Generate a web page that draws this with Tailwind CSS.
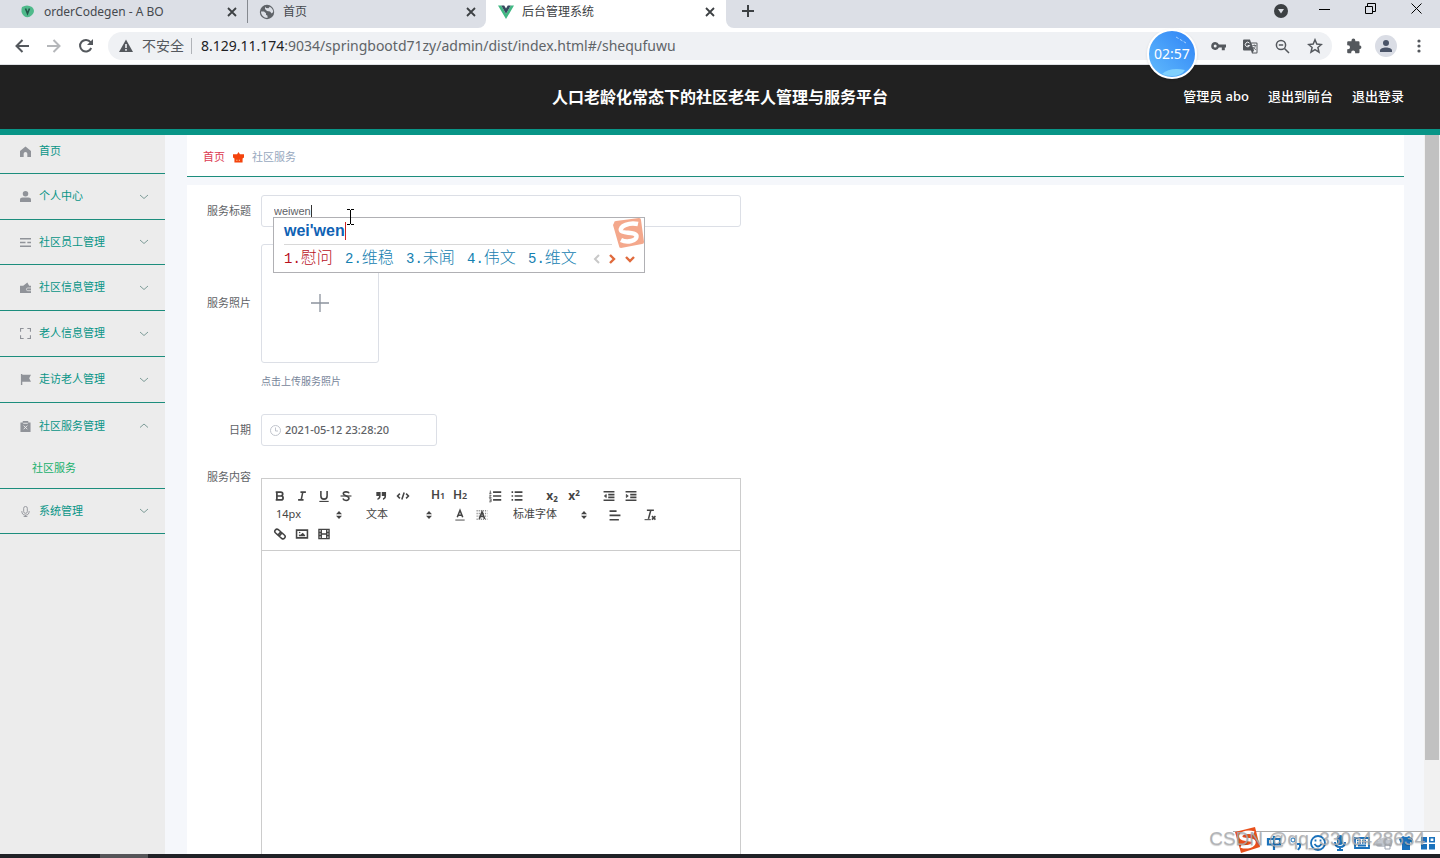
<!DOCTYPE html>
<html lang="zh-CN">
<head>
<meta charset="utf-8">
<title>后台管理系统</title>
<script src="https://cdn.jsdelivr.net/npm/@tailwindcss/browser@4"></script>
</head>
<body class="relative flex h-screen flex-col overflow-hidden bg-white font-['Noto_Sans','Noto_Sans_CJK_SC',sans-serif] text-[11px] text-[#606266]">

<!-- Browser tabs -->
<div class="flex h-7 shrink-0 bg-white text-xs text-[#45494e]">
  <div class="flex rounded-br-lg bg-[#dcdfe6]">
    <div class="flex h-[23px] w-[248px] items-center border-r border-[#85898f] pr-[9px] pl-5">
      <svg class="mr-2 h-4 w-4" viewBox="0 0 16 16"><path d="M2 3Q7 0 12 3Q16 7 12 11Q8 15 4 12Q0 8 2 3Z" fill="#4fba8b"/><path d="M5.500 4.500l2 5l2-5" fill="none" stroke="#23574a" stroke-width="1.600"/></svg>
      <span class="flex-1 whitespace-nowrap">orderCodegen - A BO</span>
      <button aria-label="关闭标签页" class="text-[#3c4043]"><svg class="h-3 w-3" viewBox="0 0 12 12" fill="none" stroke="currentColor" stroke-width="1.800"><path d="M2 2l8 8M10 2l-8 8"/></svg></button>
    </div>
    <div class="flex h-[23px] w-[238px] items-center pr-[9px] pl-[11px]">
      <svg class="mr-2 h-4 w-4" viewBox="0 0 16 16"><circle cx="8" cy="8" r="7.200" fill="#5f6368"/><path d="M2 7.500h3l2 1.800v1.400l1.500 1v2.300C4.500 14 2 11 2 7.500zM6 2.500l1 1.500 2.500.3 1.200-1.600c2.300 1 3.500 3 3.500 5.300l-1.500 1.500-1.700-2-3-.5-2-2z" fill="#dcdfe6"/></svg>
      <span class="flex-1">首页</span>
      <button aria-label="关闭标签页" class="text-[#3c4043]"><svg class="h-3 w-3" viewBox="0 0 12 12" fill="none" stroke="currentColor" stroke-width="1.800"><path d="M2 2l8 8M10 2l-8 8"/></svg></button>
    </div>
  </div>
  <div class="flex h-7 w-60 items-center bg-white pr-2.5 pb-[5px] pl-3">
    <svg class="mr-2 h-4 w-4" viewBox="0 0 16 16"><path d="M0 1.500h3.200L8 9.800l4.800-8.300H16L8 15z" fill="#41b883"/><path d="M3.200 1.500h3L8 4.600l1.800-3.100h3L8 9.800z" fill="#35495e"/></svg>
    <span class="flex-1 text-[#3c4043]">后台管理系统</span>
    <button aria-label="关闭标签页" class="text-[#3c4043]"><svg class="h-3 w-3" viewBox="0 0 12 12" fill="none" stroke="currentColor" stroke-width="1.800"><path d="M2 2l8 8M10 2l-8 8"/></svg></button>
  </div>
  <div class="flex flex-1 rounded-bl-lg bg-[#dcdfe6]">
    <button aria-label="新标签页" class="ml-4 h-[22px] text-[#3c4043]"><svg class="h-3 w-3" viewBox="0 0 12 12" fill="none" stroke="currentColor" stroke-width="2"><path d="M6 0v12M0 6h12"/></svg></button>
    <div class="ml-auto flex h-[22px] items-center text-black">
      <button aria-label="搜索标签页" class="mr-[31px]"><svg class="h-[14px] w-[14px]" viewBox="0 0 14 14"><circle cx="7" cy="7" r="7" fill="#3c4043"/><path d="M4 5h6l-3 4.500z" fill="#dcdfe6"/></svg></button>
      <button aria-label="最小化" class="mr-[35px] mb-1.5"><svg class="h-[11px] w-[11px]" viewBox="0 0 11 11"><path d="M0 6.500h11" stroke="#000"/></svg></button>
      <button aria-label="还原" class="mr-[35px] mb-1.5"><svg class="h-[11px] w-[11px]" viewBox="0 0 11 11" fill="none" stroke="#000"><path d="M.5 3.500h7v7h-7zM2.500 3V.5h8v8H8"/></svg></button>
      <button aria-label="关闭" class="mr-[18px] mb-1.5"><svg class="h-[11px] w-[11px]" viewBox="0 0 11 11" fill="none" stroke="#000"><path d="M.5.5l10 10M10.500.5l-10 10"/></svg></button>
    </div>
  </div>
</div>

<!-- Browser toolbar -->
<div class="flex h-[37px] shrink-0 items-center border-b border-[#dfe1e5] bg-white text-[#54585d]">
  <button aria-label="后退" class="ml-[15px]"><svg class="h-[14px] w-[14px]" viewBox="0 0 14 14" fill="none" stroke="currentColor" stroke-width="2"><path d="M14 7H1.500M7.500 1L1.500 7l6 6"/></svg></button>
  <button aria-label="前进" class="ml-[18px] text-[#b5b7ba]"><svg class="h-[14px] w-[14px]" viewBox="0 0 14 14" fill="none" stroke="currentColor" stroke-width="2"><path d="M0 7h12.500M6.500 1l6 6-6 6"/></svg></button>
  <button aria-label="重新加载" class="ml-[17px]"><svg class="h-4 w-4" viewBox="0 0 16 16"><path d="M13.200 10A5.800 5.800 0 1 1 12.500 4.200" fill="none" stroke="currentColor" stroke-width="2"/><path d="M15 1v6H9z" fill="currentColor"/></svg></button>
  <div class="ml-[14px] flex h-7 flex-1 items-center rounded-full bg-[#eff1f4] pl-[11px]">
    <svg class="h-[14px] w-[14px]" viewBox="0 0 14 14"><path d="M7 .5L14 13H0z" fill="#54585d"/><path d="M7 5v4M7 10v1.700" stroke="#eff1f4" stroke-width="1.600"/></svg>
    <span class="ml-[9px] text-sm">不安全</span>
    <span class="mr-[9px] ml-[7px] h-4 w-px bg-[#b0b3b8]"></span>
    <div class="flex-1 text-sm whitespace-nowrap text-[#606468]"><span class="text-[#202124]">8.129.11.174</span>:9034/springbootd71zy/admin/dist/index.html#/shequfuwu</div>
    <div class="mr-[9px] flex items-center gap-[17px]">
      <button aria-label="密码"><svg class="h-[15px] w-[15px]" viewBox="0 0 15 15"><path d="M4.200 3a4 4 0 0 1 3.700 2.600H15v3h-1.200v2.600h-3V8.600H7.900A4 4 0 1 1 4.200 3z" fill="currentColor"/><circle cx="4.200" cy="7" r="1.500" fill="#eff1f4"/></svg></button>
      <button aria-label="翻译"><svg class="h-[15px] w-[15px]" viewBox="0 0 15 15"><path d="M1 .5h6l1 3h5.500a1 1 0 0 1 1 1v9a1 1 0 0 1-1 1H9l-1-3H1a1 1 0 0 1-1-1v-9a1 1 0 0 1 1-1z" fill="currentColor"/><path d="M8.500 4.500h5v9H9.700l1.300-2z" fill="#eff1f4"/><path d="M6.500 4.200a2.300 2.300 0 1 0 .2 2.300H4.600" fill="none" stroke="#eff1f4"/><path d="M9.300 6.500h4M11.300 5.500v1M12.500 6.500q-.5 2.500-2.500 4M10 8q1 1.800 3 2.700" fill="none" stroke="currentColor" stroke-width=".8"/></svg></button>
      <button aria-label="缩放"><svg class="h-[15px] w-[15px]" viewBox="0 0 15 15" fill="none" stroke="currentColor" stroke-width="1.500"><circle cx="6" cy="6" r="4.600"/><path d="M9.500 9.500l4.500 4.500M3.800 6h4.400"/></svg></button>
      <button aria-label="收藏"><svg class="h-4 w-4" viewBox="0 0 16 16" fill="none" stroke="currentColor" stroke-width="1.500"><path d="M8 1.800l1.800 4.300 4.600.4-3.500 3 1.100 4.600L8 11.700l-4 2.400 1.100-4.600-3.500-3 4.600-.4z"/></svg></button>
    </div>
  </div>
  <button aria-label="扩展程序" class="ml-[14px]"><svg class="h-4 w-4" viewBox="0 0 16 16"><path d="M13.500 7.500V4.200a1 1 0 0 0-1-1H9.300V2.500a1.900 1.900 0 0 0-3.800 0v.7H2.200a1 1 0 0 0-1 1v3h.8a2 2 0 0 1 0 4h-.8v3a1 1 0 0 0 1 1h3v-.8a2 2 0 0 1 4 0v.8h3.300a1 1 0 0 0 1-1v-3.200h.5a1.800 1.800 0 0 0 0-3.500z" fill="currentColor"/></svg></button>
  <button aria-label="用户" class="ml-[13px]"><svg class="h-[22px] w-[22px]" viewBox="0 0 22 22"><circle cx="11" cy="11" r="11" fill="#dadde5"/><circle cx="11" cy="8" r="3" fill="#4a5468"/><path d="M5 17v-1.500c0-2 3-3 6-3s6 1 6 3V17z" fill="#4a5468"/></svg></button>
  <button aria-label="更多" class="mr-[19px] ml-5"><svg class="h-[14px] w-1" viewBox="0 0 4 14" fill="currentColor"><circle cx="2" cy="2" r="1.600"/><circle cx="2" cy="7" r="1.600"/><circle cx="2" cy="12" r="1.600"/></svg></button>
</div>

<!-- Recording timer -->
<div class="absolute top-[29px] left-[1147px] z-20 flex h-[50px] w-[50px] items-center justify-center rounded-full border-2 border-white bg-linear-to-bl from-[#2f82f5] to-[#62bbfc] text-sm text-white shadow">
  <svg class="absolute inset-0 h-[46px] w-[46px]" viewBox="0 0 46 46" fill="none"><path d="M13 43q8-7 23-4q-4 6-13 6q-6 0-10-2z" fill="#7fd0fd"/><path d="M27 6l10 6" stroke="#a9d2ff" stroke-dasharray="3 1.500"/></svg>
  <span class="relative">02:57</span>
</div>

<!-- Site header -->
<header class="relative flex h-[70px] shrink-0 items-center justify-center border-b-6 border-[#089587] bg-[#212121] text-white">
  <h1 class="text-base font-bold">人口老龄化常态下的社区老年人管理与服务平台</h1>
  <nav class="absolute inset-y-0 right-9 flex items-center gap-[19px] text-[13px] font-medium">
    <span>管理员 abo</span><a href="#">退出到前台</a><a href="#">退出登录</a>
  </nav>
</header>

<div class="flex min-h-0 flex-1 bg-[#f5f7fb]">
  <!-- Sidebar -->
  <aside class="w-[165px] shrink-0 bg-[#ececec] text-[#089587]">
    <a href="#" class="flex h-[39px] items-center border-b border-[#1c8d7d] pb-1.5 pl-5"><svg class="mr-2 h-[11px] w-[11px] text-[#909399]" viewBox="0 0 12 12" fill="currentColor"><path d="M6 .5L12 5.500V12H8V8.500a2 2 0 0 0-4 0V12H0V5.500z"/></svg>首页</a>
    <a href="#" class="flex h-[46px] items-center border-b border-[#1c8d7d] pr-4 pl-5"><svg class="mr-2 h-[11px] w-[11px] text-[#909399]" viewBox="0 0 12 12" fill="currentColor"><circle cx="6" cy="3" r="3"/><path d="M0 12V9.500q0-2.500 3-2.500h6q3 0 3 2.500V12z"/></svg><span class="flex-1">个人中心</span><svg class="h-2.5 w-2.5" viewBox="0 0 10 10" fill="none" stroke="#7d9c98"><path d="M1 3l4 3.500L9 3"/></svg></a>
    <a href="#" class="flex h-[45px] items-center border-b border-[#1c8d7d] pr-4 pl-5"><svg class="mr-2 h-[11px] w-[11px] text-[#909399]" viewBox="0 0 12 12" fill="none" stroke="currentColor" stroke-width="1.700"><path d="M0 2h12M0 6h6M0 10h12M8 6h4"/></svg><span class="flex-1">社区员工管理</span><svg class="h-2.5 w-2.5" viewBox="0 0 10 10" fill="none" stroke="#7d9c98"><path d="M1 3l4 3.500L9 3"/></svg></a>
    <a href="#" class="flex h-[46px] items-center border-b border-[#1c8d7d] pr-4 pl-5"><svg class="mr-2 h-[11px] w-[11px] text-[#909399]" viewBox="0 0 12 12"><path d="M0 4h3.500L8 .5 10 4h2v8H0z" fill="currentColor"/><path d="M12 6.500H8.500a1.500 1.500 0 0 0 0 3H12" fill="none" stroke="#ececec" stroke-width=".8"/></svg><span class="flex-1">社区信息管理</span><svg class="h-2.5 w-2.5" viewBox="0 0 10 10" fill="none" stroke="#7d9c98"><path d="M1 3l4 3.500L9 3"/></svg></a>
    <a href="#" class="flex h-[46px] items-center border-b border-[#1c8d7d] pr-4 pl-5"><svg class="mr-2 h-[11px] w-[11px] text-[#909399]" viewBox="0 0 12 12" fill="none" stroke="currentColor" stroke-width="1.200"><path d="M.6 4V.6H4M8 .6h3.400V4M11.400 8v3.400H8M4 11.400H.6V8"/></svg><span class="flex-1">老人信息管理</span><svg class="h-2.5 w-2.5" viewBox="0 0 10 10" fill="none" stroke="#7d9c98"><path d="M1 3l4 3.500L9 3"/></svg></a>
    <a href="#" class="flex h-[46px] items-center border-b border-[#1c8d7d] pr-4 pl-5"><svg class="mr-2 h-[11px] w-[11px] text-[#909399]" viewBox="0 0 12 12" fill="currentColor"><path d="M1 0h1.500v.8H12L10 4.500l2 4H2.500V12H1z"/></svg><span class="flex-1">走访老人管理</span><svg class="h-2.5 w-2.5" viewBox="0 0 10 10" fill="none" stroke="#7d9c98"><path d="M1 3l4 3.500L9 3"/></svg></a>
    <div class="h-[86px] border-b border-[#1c8d7d]">
      <a href="#" class="flex h-[46px] items-center pr-4 pl-5"><svg class="mr-2 h-[11px] w-[11px] text-[#909399]" viewBox="0 0 12 12"><path d="M.5 1.500H3V0h6v1.500h2.500V12H.5z" fill="currentColor"/><path d="M3.500 2.500h5M4 5l4 4M8 5L4 9" stroke="#ececec"/></svg><span class="flex-1">社区服务管理</span><svg class="h-2.5 w-2.5" viewBox="0 0 10 10" fill="none" stroke="#7d9c98"><path d="M1 6.500L5 3l4 3.500"/></svg></a>
      <a href="#" class="flex h-[39px] items-center pl-8 text-[#17b06b]">社区服务</a>
    </div>
    <a href="#" class="flex h-[45px] items-center border-b border-[#1c8d7d] pr-4 pl-5"><svg class="mr-2 h-[11px] w-[11px] text-[#909399]" viewBox="0 0 12 12" fill="none" stroke="currentColor"><rect x="4" y=".5" width="4" height="7.500" rx="2"/><path d="M2 5.500q0 4.500 4 4.500t4-4.500M6 10v2M4 11.500h4"/></svg><span class="flex-1">系统管理</span><svg class="h-2.5 w-2.5" viewBox="0 0 10 10" fill="none" stroke="#7d9c98"><path d="M1 3l4 3.500L9 3"/></svg></a>
  </aside>

  <!-- Main column -->
  <main class="mr-5 ml-[22px] flex min-w-0 flex-1 flex-col">
    <nav class="flex h-[42px] shrink-0 items-center border-b border-[#1c8d7d] bg-white pt-[3px] pl-4">
      <a href="#" class="text-[#dc3b52]">首页</a>
      <svg class="mx-2 h-[11px] w-[11px]" viewBox="0 0 10 10"><path d="M5 0l1.300 2H10v3L8.700 6v3.500H1.300V6L0 5V2h3.700z" fill="#f4430c"/><path d="M3.500 7v1M5.800 7v1" stroke="#ffd0a0"/></svg>
      <span class="text-[#97a8be]">社区服务</span>
    </nav>

    <form class="relative mt-2 flex min-h-0 flex-1 flex-col overflow-hidden bg-white pt-2.5">
      <div class="flex h-8 shrink-0 items-center">
        <label for="title" class="w-16 text-right">服务标题</label>
        <input id="title" value="weiwen" class="ml-2.5 h-8 w-[480px] rounded-[3px] border border-[#dcdfe6] px-3 font-['Liberation_Sans',sans-serif]">
      </div>
      <div class="mt-[17px] flex shrink-0">
        <label for="photo" class="flex h-[119px] w-16 items-center justify-end">服务照片</label>
        <div class="ml-2.5">
          <button id="photo" type="button" aria-label="上传服务照片" class="flex h-[119px] w-[118px] items-center justify-center rounded-[3px] border border-[#dcdfe6] pb-0.5"><svg class="h-[18px] w-[18px]" viewBox="0 0 18 18" stroke="#8c939d" stroke-width="1.300"><path d="M9 0v18M0 9h18"/></svg></button>
          <p class="mt-[9px] h-[19px] text-[10px] leading-[18px] text-[#77859a]">点击上传服务照片</p>
        </div>
      </div>
      <div class="mt-[23px] flex h-8 shrink-0 items-center">
        <label for="date" class="w-16 text-right">日期</label>
        <div class="ml-2.5 flex h-8 w-44 items-center rounded-[3px] border border-[#dcdfe6] pl-2">
          <svg class="mr-1 h-[11px] w-[11px]" viewBox="0 0 11 11" fill="none" stroke="#c0c4cc"><circle cx="5.500" cy="5.500" r="5"/><path d="M5.500 2.500V6H8"/></svg>
          <input id="date" value="2021-05-12 23:28:20" class="w-36 font-medium">
        </div>
      </div>
      <div class="mt-[23px] flex min-h-0 flex-1">
        <label for="content" class="h-4 w-16 text-right leading-4">服务内容</label>
        <div class="mt-[9px] ml-2.5 flex w-[480px] flex-col border border-b-0 border-[#ccc]">
          <div class="flex h-[72px] shrink-0 flex-col border-b border-[#ccc] pt-[7px] pl-[7px] text-[#444]">
            <div class="flex h-[19px] items-center gap-[13px]">
              <div class="flex">
                <button type="button" aria-label="粗体" class="flex w-[22px] justify-center"><svg class="h-[14px] w-[14px]" viewBox="0 0 18 18" fill="none" stroke="currentColor" stroke-width="2.200"><path d="M5 4h5a2.500 2.500 0 0 1 0 5H5zM5 9h5.500a2.500 2.500 0 0 1 0 5H5zM3.500 4H6M3.500 14H6"/></svg></button>
                <button type="button" aria-label="斜体" class="flex w-[22px] justify-center"><svg class="h-[14px] w-[14px]" viewBox="0 0 18 18" fill="none" stroke="currentColor" stroke-width="2"><path d="M7 4h7M4 14h7M8 14l2-10"/></svg></button>
                <button type="button" aria-label="下划线" class="flex w-[22px] justify-center"><svg class="h-[14px] w-[14px]" viewBox="0 0 18 18" fill="none" stroke="currentColor" stroke-width="2"><path d="M5 2.500V9a4 4 0 0 0 8 0V2.500"/><path d="M3 16h12" stroke-width="1.500"/></svg></button>
                <button type="button" aria-label="删除线" class="flex w-[22px] justify-center"><svg class="h-[14px] w-[14px]" viewBox="0 0 18 18" fill="none" stroke="currentColor" stroke-width="2"><path d="M2 9h14" stroke-width="1.500"/><path d="M13 5.500C12 3 5.500 3 5.500 6.200C5.500 9 12.800 8.500 12.800 12C12.800 15.500 6 15.500 5 12.300"/></svg></button>
              </div>
              <div class="flex">
                <button type="button" aria-label="引用" class="flex w-[22px] justify-center"><svg class="h-[14px] w-[14px]" viewBox="0 0 18 18" fill="currentColor"><path d="M3 4h5.500v5q0 4-4 5v-2q2-.8 2-3H3zM10 4h5.500v5q0 4-4 5v-2q2-.8 2-3H10z"/></svg></button>
                <button type="button" aria-label="代码" class="flex w-[22px] justify-center"><svg class="h-[14px] w-[14px]" viewBox="0 0 18 18" fill="none" stroke="currentColor" stroke-width="2"><path d="M5 6L2 9l3 3M13 6l3 3-3 3M10.500 4.500l-3 9"/></svg></button>
              </div>
              <div class="flex text-xs leading-[14px] font-semibold">
                <button type="button" aria-label="标题一" class="w-[22px]">H<span class="text-[9px]">1</span></button>
                <button type="button" aria-label="标题二" class="w-[22px]">H<span class="text-[9px]">2</span></button>
              </div>
              <div class="flex">
                <button type="button" aria-label="有序列表" class="flex w-[22px] justify-center"><svg class="h-[14px] w-[14px]" viewBox="0 0 18 18" fill="none" stroke="currentColor" stroke-width="2"><path d="M6.500 4H17M6.500 9H17M6.500 14H17"/><path d="M3 2v4M1.500 5.500h3M1.500 8h2.500L1.700 10.800h2.800M1.500 12.500h2.500v4H1.500M2 14.500h2" stroke-width="1"/></svg></button>
                <button type="button" aria-label="无序列表" class="flex w-[22px] justify-center"><svg class="h-[14px] w-[14px]" viewBox="0 0 18 18" fill="none" stroke="currentColor" stroke-width="2"><path d="M6 4h10M6 9h10M6 14h10M2 4h2M2 9h2M2 14h2"/></svg></button>
              </div>
              <div class="flex text-xs leading-[14px] font-bold">
                <button type="button" aria-label="下标" class="w-[22px]">x<sub class="text-[8px]">2</sub></button>
                <button type="button" aria-label="上标" class="w-[22px]">x<sup class="text-[8px]">2</sup></button>
              </div>
              <div class="flex">
                <button type="button" aria-label="减少缩进" class="flex w-[22px] justify-center"><svg class="h-[14px] w-[14px]" viewBox="0 0 18 18" stroke="currentColor" stroke-width="2"><path d="M2 3.500h14M8 7.200h8M8 10.800h8M2 14.500h14"/><path d="M5.500 7v4L3 9z" fill="currentColor" stroke-width="1"/></svg></button>
                <button type="button" aria-label="增加缩进" class="flex w-[22px] justify-center"><svg class="h-[14px] w-[14px]" viewBox="0 0 18 18" stroke="currentColor" stroke-width="2"><path d="M2 3.500h14M8 7.200h8M8 10.800h8M2 14.500h14"/><path d="M3 7v4l2.500-2z" fill="currentColor" stroke-width="1"/></svg></button>
              </div>
            </div>
            <div class="flex h-[19px] items-center gap-[13px]">
              <div class="relative flex items-center">
                <select aria-label="字号" class="w-[77px] appearance-none pl-[7px]"><option>14px</option></select>
                <svg class="pointer-events-none absolute right-1 h-2 w-[6px]" viewBox="0 0 6 8" fill="currentColor"><path d="M3 0l3 3.300H0zM3 8l3-3.300H0z"/></svg>
              </div>
              <div class="relative flex items-center">
                <select aria-label="标题" class="w-[77px] appearance-none pl-[7px]"><option>文本</option></select>
                <svg class="pointer-events-none absolute right-1 h-2 w-[6px]" viewBox="0 0 6 8" fill="currentColor"><path d="M3 0l3 3.300H0zM3 8l3-3.300H0z"/></svg>
              </div>
              <div class="flex">
                <button type="button" aria-label="文字颜色" class="flex w-[22px] justify-center"><svg class="h-[14px] w-[14px]" viewBox="0 0 18 18" fill="none" stroke="currentColor" stroke-width="2"><path d="M5.500 12L9 3l3.500 9M6.500 9.200h5"/><path d="M3 15.500h12" stroke-width="1.200"/></svg></button>
                <button type="button" aria-label="背景颜色" class="flex w-[22px] justify-center"><svg class="h-[14px] w-[14px]" viewBox="0 0 18 18" fill="none" stroke="currentColor" stroke-width="2"><path d="M2 3.500h14M2 7h14M2 10.500h14M2 14.500h14" stroke-width="1.800" stroke-dasharray="1.500 1.200" opacity=".6"/><path d="M5.500 14L9 5l3.500 9M6.500 11h5"/></svg></button>
              </div>
              <div class="relative flex items-center">
                <select aria-label="字体" class="w-[85px] appearance-none pl-[7px]"><option>标准字体</option></select>
                <svg class="pointer-events-none absolute right-1 h-2 w-[6px]" viewBox="0 0 6 8" fill="currentColor"><path d="M3 0l3 3.300H0zM3 8l3-3.300H0z"/></svg>
              </div>
              <button type="button" aria-label="对齐" class="flex w-[22px] justify-center"><svg class="h-[14px] w-[14px]" viewBox="0 0 18 18" fill="none" stroke="currentColor" stroke-width="2"><path d="M2 4h9M2 9.500h14M2 15h12"/></svg></button>
              <button type="button" aria-label="清除格式" class="flex w-[22px] justify-center"><svg class="h-[14px] w-[14px]" viewBox="0 0 18 18" fill="none" stroke="currentColor" stroke-width="2"><path d="M5 3h9M10 3L7 14"/><path d="M2 15h8" stroke-width="1.300"/><path d="M11.500 10.500l4.500 4.500M16 10.500L11.500 15"/></svg></button>
            </div>
            <div class="flex h-[19px] items-center">
              <button type="button" aria-label="链接" class="flex w-[22px] justify-center"><svg class="h-[14px] w-[14px]" viewBox="0 0 18 18" fill="none" stroke="currentColor" stroke-width="2"><rect x="2" y="4" width="9" height="5.500" rx="2.700" transform="rotate(40 6.500 6.700)"/><rect x="7" y="8.500" width="9" height="5.500" rx="2.700" transform="rotate(40 11.500 11.200)"/></svg></button>
              <button type="button" aria-label="图片" class="flex w-[22px] justify-center"><svg class="h-[14px] w-[14px]" viewBox="0 0 18 18" fill="none" stroke="currentColor" stroke-width="2"><path d="M2 4h14v10H2z"/><path d="M5 12V9.500l2 .5 3-2.500 3 3V12z" fill="currentColor" stroke="none"/><circle cx="6" cy="7" r="1" fill="currentColor" stroke="none"/></svg></button>
              <button type="button" aria-label="视频" class="flex w-[22px] justify-center"><svg class="h-[14px] w-[14px]" viewBox="0 0 18 18" fill="none" stroke="currentColor" stroke-width="1.800"><path d="M2.500 3h13v12h-13zM5.500 3v12M12.500 3v12M5.500 9h7M2.500 7h3M2.500 11h3M12.500 7h3M12.500 11h3"/></svg></button>
            </div>
          </div>
          <textarea id="content" class="min-h-0 flex-1 resize-none p-3 outline-none"></textarea>
        </div>
      </div>

      <!-- Input method candidates -->
      <div class="absolute top-8 left-[86px] h-14 w-[372px] border border-[#b0b0b4] bg-white">
        <div class="mr-8 ml-2.5 flex h-[27px] items-center border-b border-[#d8d8d8] font-['Liberation_Sans',sans-serif] text-base font-bold text-[#0f62b4]">wei'wen<span class="h-[18px] w-px bg-[#cc2222]"></span></div>
        <ol class="flex h-7 items-center pl-2.5 font-['Liberation_Mono','Noto_Sans_CJK_SC',monospace] text-base font-light text-[#1480b0]">
          <li class="w-[61px] text-[#b8101c]"><span class="text-sm">1.</span>慰问</li>
          <li class="w-[61px]"><span class="text-sm">2.</span>维稳</li>
          <li class="w-[61px]"><span class="text-sm">3.</span>未闻</li>
          <li class="w-[61px]"><span class="text-sm">4.</span>伟文</li>
          <li class="w-[61px]"><span class="text-sm">5.</span>维文</li>
          <li class="ml-[3px] flex"><svg class="h-2.5 w-11" viewBox="0 0 44 10" fill="none" stroke-width="2"><path d="M7 1L3 5l4 4" stroke="#c8c8c8"/><path d="M18 1l4 4-4 4M34 3l4 4 4-4" stroke="#e06a3c" stroke-width="2.400"/></svg></li>
        </ol>
        <svg class="absolute top-0 right-0 h-[31px] w-8" viewBox="0 0 32 31"><path d="M2 5q0-2 2-2L27 0q2 0 2 2l3 22q0 2-2 2L9 30q-2 0-2-2L1 7z" fill="#f4a88c"/><path d="M26 6C17 4 8 8 9 12.500C10 16 24 13.500 24.500 18C25 23 15 25 9 22" fill="none" stroke="#fff" stroke-width="4.500"/></svg>
      </div>
      <svg class="absolute top-6 left-[160px] h-4 w-[7px]" viewBox="0 0 7 16" fill="none" stroke="#000"><path d="M0 .5h3M4 .5h3M3.500 1v14M0 15.500h3M4 15.500h3"/></svg>
      <span class="absolute top-5 left-[124px] h-3 w-px bg-[#333]"></span>
    </form>
  </main>

  <!-- Page scrollbar -->
  <div class="w-4 shrink-0 bg-[#f1f1f1] px-px"><div class="h-[625px] bg-[#c1c1c1]"></div></div>
</div>

<!-- Taskbar edge -->
<div class="h-1 shrink-0 bg-[#202126] pl-[100px]"><div class="h-1 w-12 bg-[#555558]"></div></div>

<!-- Input method status bar -->
<div class="absolute right-0 bottom-1 flex h-[23px] items-center gap-[6px] border-t border-[#aaa] bg-white pr-1 pl-[33px] text-[#1b72bc]">
  <svg class="absolute bottom-0 left-0 h-7 w-7" viewBox="0 0 28 28"><path d="M2 6L22 1l5 20-19 6z" fill="#e8501c"/><path d="M21 7C13 5 6 8 8 11.500C10 15 20 12 21 16C21 20 14 22 8 20" fill="none" stroke="#fff" stroke-width="3.500"/></svg>
  <svg class="h-4 w-4" viewBox="0 0 16 16" fill="none" stroke="currentColor" stroke-width="2.200"><path d="M2 4h12v5.500H2zM8 1v14"/></svg>
  <svg class="h-4 w-4" viewBox="0 0 16 16"><circle cx="5" cy="5" r="2" fill="none" stroke="currentColor"/><path d="M9 9h3v3l-2 3" fill="none" stroke="currentColor" stroke-width="2"/></svg>
  <svg class="h-4 w-4" viewBox="0 0 16 16" fill="none" stroke="currentColor" stroke-width="1.800"><circle cx="8" cy="8" r="7"/><path d="M5.500 4.500v2M10.500 4.500v2M4.500 9q3.500 5 7 0"/></svg>
  <svg class="h-4 w-4" viewBox="0 0 16 16" fill="none" stroke="currentColor" stroke-width="2"><rect x="6" y="1" width="4" height="8" rx="2" fill="currentColor"/><path d="M3 7q0 5 5 5t5-5M8 12v4M5 15h6"/></svg>
  <svg class="h-4 w-4" viewBox="0 0 16 16" fill="none" stroke="currentColor" stroke-width="1.800"><path d="M1 3h14v10H1zM4 10.500h8"/><path d="M3 5.500h10M3 8h10" stroke-width="1.400" stroke-dasharray="1.500 1"/></svg>
  <svg class="h-4 w-4" viewBox="0 0 16 16"><path d="M3 12a3 3 0 0 1 0-6 5 5 0 0 1 9-1 3.500 3.500 0 0 1 2 7z" fill="#c3c8d0"/><path d="M9 10h5v4H9z" fill="#fff" stroke="#9aa2b0"/></svg>
  <svg class="h-4 w-4" viewBox="0 0 16 16" fill="currentColor"><path d="M1 4l4-3q3 2 6 0l4 3-1.500 4L12 7v8H4V7l-1.500 1z"/></svg>
  <svg class="h-4 w-4" viewBox="0 0 16 16" fill="currentColor"><path d="M1 2h6v5.500H1zM1 9h6v5.500H1zM9 9h6v5.500H9z"/><path d="M9.800 2.800h4.400v4H9.800z" fill="none" stroke="currentColor" stroke-width="1.600"/></svg>
</div>
<div class="absolute right-[15px] bottom-[7px] z-10 font-['Liberation_Sans',sans-serif] text-[19px] leading-6 whitespace-nowrap text-[#a9abaf]/85 text-shadow-xs">CSDN @qq_3306428634</div>
</body>
</html>
